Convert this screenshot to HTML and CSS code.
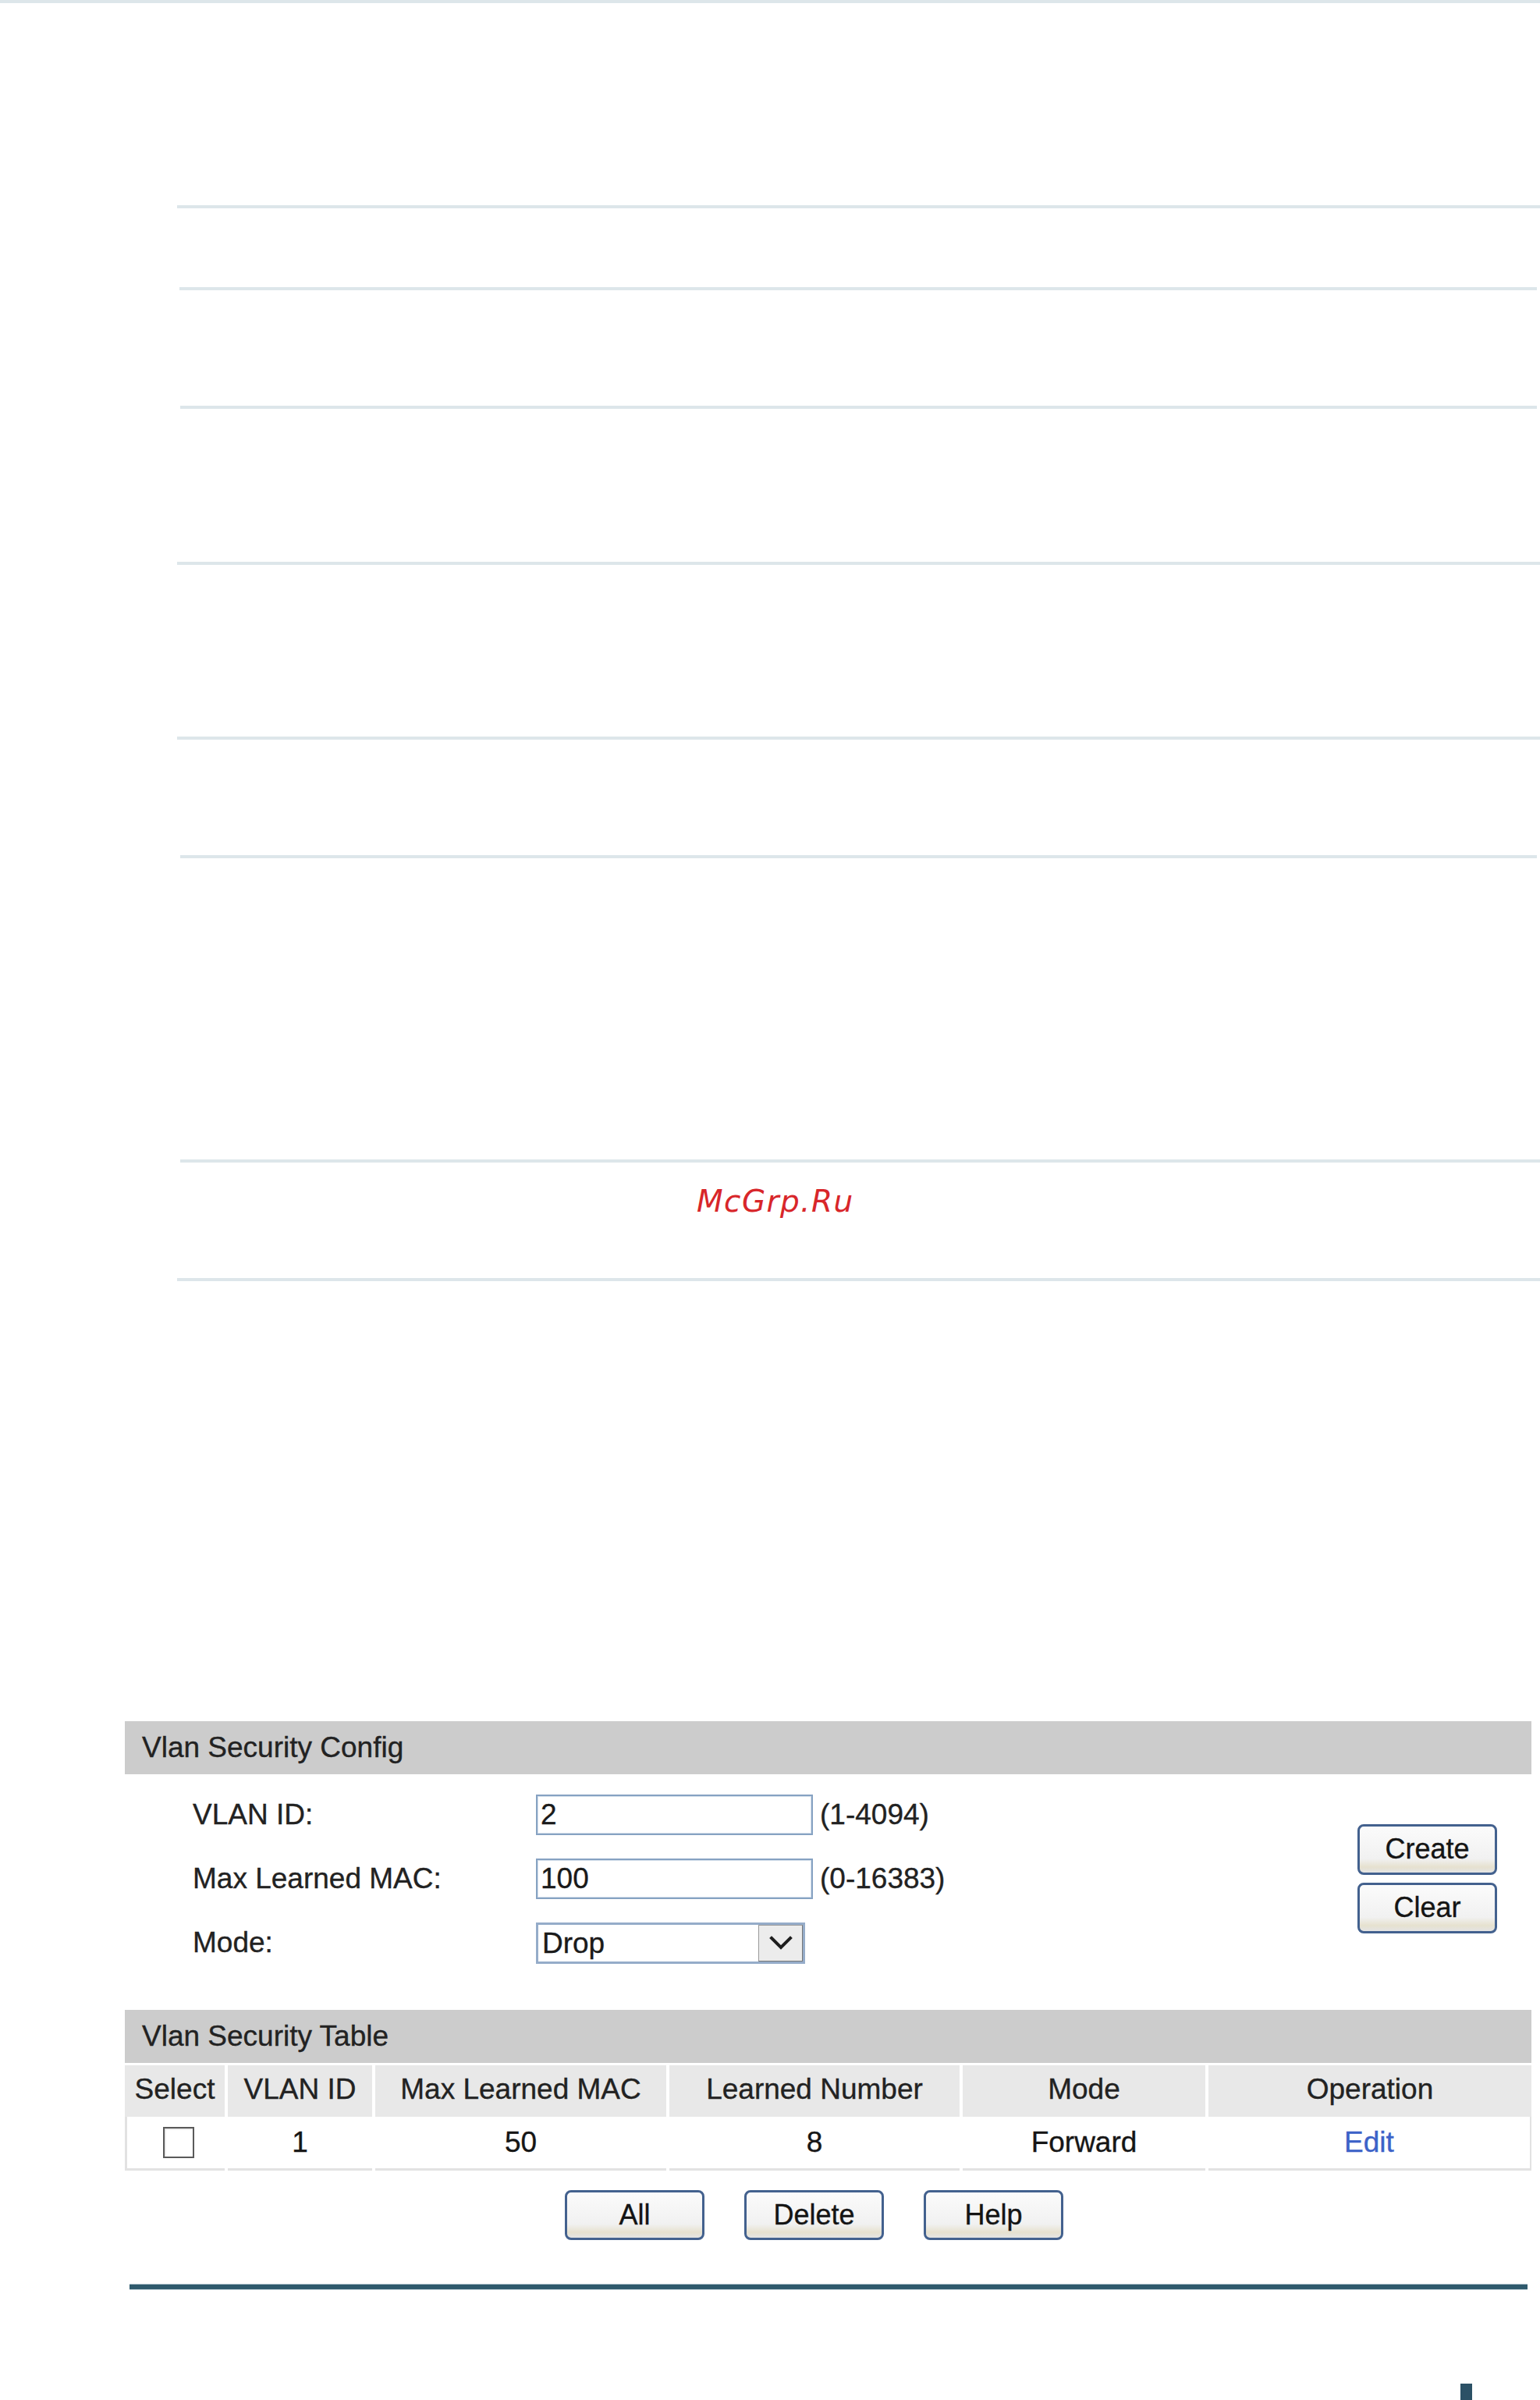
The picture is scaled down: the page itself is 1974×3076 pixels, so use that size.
FILE: index.html
```html
<!DOCTYPE html>
<html lang="en">
<head>
<meta charset="utf-8">
<title>Vlan Security</title>
<link rel="stylesheet" href="styles.css">
</head>
<body>
<div class="page">
  <div class="rule rule-top"></div>
  <div class="rule r1"></div>
  <div class="rule r2"></div>
  <div class="rule r3"></div>
  <div class="rule r4"></div>
  <div class="rule r5"></div>
  <div class="rule r6"></div>
  <div class="rule r7"></div>
  <div class="watermark-band"><span class="watermark">McGrp.Ru</span></div>
  <div class="rule r8"></div>

  <section class="panel">
    <div class="bar">Vlan Security Config</div>
    <div class="config">
      <div class="form">
        <div class="lbl">VLAN ID:</div>
        <div class="field"><div class="input">2</div><span class="hint">(1-4094)</span></div>
        <div class="lbl">Max Learned MAC:</div>
        <div class="field"><div class="input">100</div><span class="hint">(0-16383)</span></div>
        <div class="lbl">Mode:</div>
        <div class="field">
          <div class="select">
            <span class="select-val">Drop</span>
            <span class="select-arrow">
              <svg width="30" height="20" viewBox="0 0 30 20"><path d="M3 4 L15 16 L27 4" fill="none" stroke="#1e1e1e" stroke-width="4" stroke-linecap="square"/></svg>
            </span>
          </div>
        </div>
      </div>
      <div class="side-btns">
        <div class="btn">Create</div>
        <div class="btn">Clear</div>
      </div>
    </div>

    <div class="bar">Vlan Security Table</div>
    <div class="grid">
      <div class="th">Select</div>
      <div class="th">VLAN ID</div>
      <div class="th">Max Learned MAC</div>
      <div class="th">Learned Number</div>
      <div class="th">Mode</div>
      <div class="th">Operation</div>

      <div class="td td-first"><span class="checkbox"></span></div>
      <div class="td">1</div>
      <div class="td">50</div>
      <div class="td">8</div>
      <div class="td">Forward</div>
      <div class="td td-last"><span class="link">Edit</span></div>
    </div>

    <div class="actions">
      <div class="btn">All</div>
      <div class="btn">Delete</div>
      <div class="btn">Help</div>
    </div>
  </section>

  <div class="footer-rule"></div>
  <div class="page-mark"></div>
</div>
</body>
</html>
```

FILE: styles.css
```css
html, body {
  margin: 0;
  padding: 0;
  background: #ffffff;
}

.page {
  width: 1974px;
  height: 3076px;
  overflow: hidden;
  font-family: "Liberation Sans", Arial, sans-serif;
  color: #1c1c1c;
}

/* light separator rules */
.rule {
  height: 4px;
  background: #dde6ea;
}
.rule-top { margin-left: 0; width: 1974px; }
.r1 { margin-top: 259px; margin-left: 227px; width: 1747px; }
.r2 { margin-top: 101px; margin-left: 230px; width: 1740px; }
.r3 { margin-top: 148px; margin-left: 231px; width: 1739px; }
.r4 { margin-top: 196px; margin-left: 227px; width: 1747px; }
.r5 { margin-top: 220px; margin-left: 227px; width: 1747px; }
.r6 { margin-top: 148px; margin-left: 231px; width: 1739px; }
.r7 { margin-top: 386px; margin-left: 231px; width: 1743px; }
.r8 { margin-top: 0; margin-left: 227px; width: 1747px; }

.watermark-band {
  height: 148px;
  box-sizing: border-box;
  padding-top: 27px;
  padding-left: 893px;
}
.watermark {
  font-family: "DejaVu Sans", sans-serif;
  font-style: oblique;
  font-size: 39px;
  line-height: 46px;
  letter-spacing: 1.4px;
  color: #d8262a;
}

/* UI panel */
.panel {
  margin-top: 564px;
  margin-left: 160px;
  width: 1803px;
  font-size: 37px;
  -webkit-text-stroke: 0.35px currentColor;
}

.bar {
  height: 68px;
  line-height: 68px;
  background: #cccccc;
  padding-left: 22px;
  color: #222222;
}

.config {
  height: 302px;
  box-sizing: border-box;
  padding: 26px 44px 60px 87px;
  display: flex;
  align-items: center;
  justify-content: space-between;
}

.form {
  display: grid;
  grid-template-columns: 440px auto;
  grid-auto-rows: 52px;
  row-gap: 30px;
  align-items: center;
}

.lbl {
  line-height: 52px;
  color: #222222;
}

.field {
  display: flex;
  align-items: center;
}

.input {
  width: 355px;
  height: 52px;
  box-sizing: border-box;
  border: 2px solid #86a2c2;
  box-shadow: inset 0 0 0 1px #d4dfeb;
  padding-left: 4px;
  line-height: 48px;
  background: #ffffff;
  color: #1a1a1a;
}

.hint {
  margin-left: 9px;
  color: #222222;
}

.select {
  width: 345px;
  height: 53px;
  box-sizing: border-box;
  border: 3px solid #95acc9;
  display: flex;
  align-items: stretch;
  background: #ffffff;
}
.select-val {
  flex: 1;
  padding-left: 5px;
  line-height: 47px;
  color: #1a1a1a;
}
.select-arrow {
  width: 57px;
  box-sizing: border-box;
  border: 1px solid #9a9a9a;
  border-right-color: #777777;
  border-bottom-color: #777777;
  background: #ececec;
  display: flex;
  align-items: center;
  justify-content: center;
}

.side-btns {
  display: flex;
  flex-direction: column;
  gap: 10px;
}

.btn {
  width: 179px;
  height: 65px;
  box-sizing: border-box;
  border: 3px solid #43618e;
  border-radius: 8px;
  background: linear-gradient(#fbfbfb 0%, #f1f1f1 70%, #e6e1cf 88%, #e4e4e4 100%);
  text-align: center;
  line-height: 58px;
  font-size: 36px;
  color: #141414;
}

/* table */
.grid {
  margin-top: 3px;
  display: grid;
  grid-template-columns: 128px 185px 373px 372px 311px 414px;
  column-gap: 4px;
}
.th {
  height: 66px;
  line-height: 62px;
  background: #e8e8e8;
  text-align: center;
  color: #222222;
}
.td {
  height: 69px;
  box-sizing: border-box;
  border-bottom: 3px solid #e2e2e2;
  line-height: 66px;
  text-align: center;
  color: #161616;
  background: #ffffff;
}
.td-first { border-left: 3px solid #e2e2e2; display: flex; align-items: center; justify-content: center; }
.td-last { border-right: 2px solid #e2e2e2; }

.checkbox {
  display: block;
  width: 40px;
  height: 40px;
  box-sizing: border-box;
  border: 2px solid #5a5a5a;
  background: #ffffff;
  box-shadow: inset 1px 1px 2px #d6d6d6;
  margin-left: 6px;
  -webkit-text-stroke: 0;
}

.link {
  color: #3c62c8;
}

.actions {
  margin-top: 25px;
  display: flex;
  justify-content: center;
  gap: 51px;
  padding-right: 36px;
}
.actions .btn {
  height: 64px;
  line-height: 57px;
}

.footer-rule {
  margin-top: 56px;
  margin-left: 166px;
  width: 1792px;
  height: 6px;
  background: #2f5a6d;
  border-top: 1px solid #b7c9d1;
  border-bottom: 1px solid #b7c9d1;
}

.page-mark {
  margin-top: 120px;
  margin-left: 1872px;
  width: 15px;
  height: 21px;
  background: #2c5166;
}
```
